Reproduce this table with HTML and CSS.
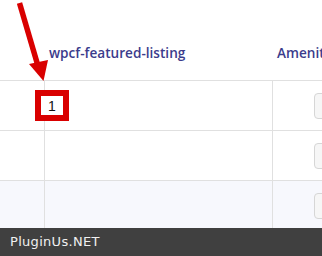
FILE: index.html
```html
<!DOCTYPE html>
<html>
<head>
<meta charset="utf-8">
<link rel="stylesheet" href="styles.css">
</head>
<body>
<div class="page">
  <div class="grid">
    <div class="cell head"></div>
    <div class="cell head"><span class="th">wpcf-featured-listing</span></div>
    <div class="cell head last"><span class="th">Amenities</span></div>

    <div class="cell"></div>
    <div class="cell"></div>
    <div class="cell last"><span class="btn"></span></div>

    <div class="cell"></div>
    <div class="cell"></div>
    <div class="cell last"><span class="btn"></span></div>

    <div class="cell alt"></div>
    <div class="cell alt"></div>
    <div class="cell alt last"><span class="btn"></span></div>
  </div>
  <div class="callout"><span>1</span></div>
  <svg class="arrow" width="60" height="90" viewBox="0 0 60 90">
    <line x1="19.5" y1="3" x2="38" y2="66" stroke="#d90000" stroke-width="5.5"/>
    <polygon points="29,64 48,60 43.5,81" fill="#d90000"/>
  </svg>
  <div class="footer">PluginUs.NET</div>
</div>
</body>
</html>
```
FILE: styles.css
```css
html, body { margin: 0; padding: 0; }
body { width: 322px; height: 256px; overflow: hidden; background: #fff; }
.page { position: relative; width: 322px; height: 256px; overflow: hidden; }
.grid {
  display: grid;
  grid-template-columns: 45px 228px 100px;
  grid-template-rows: 81px 50px 50px 50px;
  width: 373px;
}
.cell {
  border-right: 1px solid #e0e0e0;
  border-bottom: 1px solid #e0e0e0;
  display: flex;
  align-items: center;
  padding-left: 4px;
}
.cell.head { border-right: none; align-items: flex-start; padding-top: 44px; box-sizing: border-box; }
.cell.last { border-right: none; }
.cell.alt { background: #f7f8fd; }
.th {
  font-family: "Open Sans", Lato, sans-serif;
  font-weight: 600;
  font-size: 13.6px;
  color: #3b3c8c;
  white-space: nowrap;
  line-height: 18px;
}
.cell.last .btn { margin-left: 37px; }
.btn {
  display: block;
  flex-shrink: 0;
  width: 30px;
  height: 24px;
  border: 1px solid #d6d6d6;
  border-radius: 4px;
  background: #f6f6f6;
}
.callout {
  position: absolute;
  left: 35px;
  top: 90px;
  width: 22px;
  height: 19px;
  border: 6px solid #d90000;
  background: #fff;
  display: flex;
  align-items: center;
  justify-content: center;
  font-family: "Liberation Sans", sans-serif;
  font-size: 14px;
  color: #111;
}
.arrow { position: absolute; left: 0; top: 0; }
.footer {
  position: absolute;
  left: 0;
  bottom: 0;
  width: 322px;
  height: 28px;
  background: #404040;
  color: #f0f0f0;
  font-family: "DejaVu Sans", sans-serif;
  font-size: 13px;
  letter-spacing: 0.3px;
  line-height: 28px;
  padding-left: 10px;
  box-sizing: border-box;
}
```
